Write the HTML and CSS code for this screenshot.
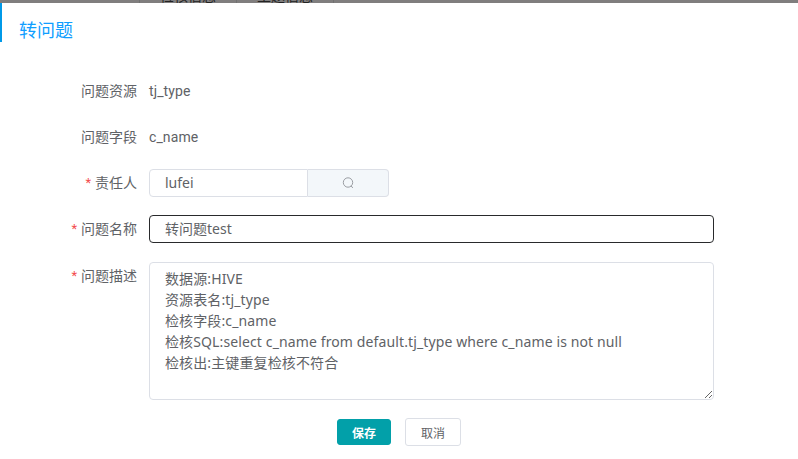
FILE: index.html
```html
<!DOCTYPE html>
<html lang="zh-CN">
<head>
<meta charset="utf-8">
<title>转问题</title>
<link rel="stylesheet" href="styles.css">
</head>
<body>
<div class="backdrop"><span class="tab"></span><span class="tab">检核信息</span><span class="tab">主题信息</span></div>
<main class="dialog">
  <h1 class="title">转问题</h1>
  <form class="form">
    <div class="row"><span class="label">问题资源</span><span class="value">tj_type</span></div>
    <div class="row"><span class="label">问题字段</span><span class="value">c_name</span></div>
    <div class="row">
      <label class="label required" for="owner">责任人</label>
      <div class="group">
        <input class="input" id="owner" value="lufei">
        <button class="search" type="button" aria-label="搜索"><svg viewBox="0 0 12 12" width="12" height="12"><circle cx="6" cy="5.5" r="4.7"/><path d="M8.8 9 11 10.8"/></svg></button>
      </div>
    </div>
    <div class="row">
      <label class="label required" for="name">问题名称</label>
      <input class="input active" id="name" value="转问题test">
    </div>
    <div class="row tall">
      <label class="label required" for="desc">问题描述</label>
      <textarea class="textarea" id="desc" spellcheck="false">数据源:HIVE
资源表名:tj_type
检核字段:c_name
检核SQL:select c_name from default.tj_type where c_name is not null
检核出:主键重复检核不符合</textarea>
    </div>
  </form>
  <footer class="actions">
    <button class="button primary" type="button">保存</button>
    <button class="button" type="button">取消</button>
  </footer>
</main>
</body>
</html>
```
FILE: styles.css
```css
* { box-sizing: border-box; }
body {
  margin: 0;
  height: 459px;
  overflow: hidden;
  background: #fff;
  color: #606266;
  font: 14px/28px Roboto, "Noto Sans CJK SC", sans-serif;
}
.backdrop {
  display: flex;
  align-items: flex-end;
  height: 3px;
  padding-left: 19px;
  overflow: hidden;
  background: #807e7e;
  color: #222;
}
.tab {
  flex: none;
  width: 97px;
  height: 20px;
  border-right: 1px solid #717171;
  line-height: 26px;
  text-align: center;
}
.tab:first-child { width: 121px; }
.dialog { height: 456px; }
.title {
  height: 39px;
  margin: 0;
  padding: 0 0 0 17px;
  border-left: 2px solid #0099e8;
  color: #109eff;
  font-size: 18px;
  font-weight: 400;
  line-height: 55px;
}
.form { padding: 35px 0 0 60px; }
.row {
  display: flex;
  align-items: flex-start;
  height: 28px;
  margin-bottom: 18px;
}
.tall { height: 138px; margin-top: 19px; }
.label {
  width: 77px;
  margin-right: 12px;
  text-align: right;
  white-space: nowrap;
}
.value { letter-spacing: 0.1px; }
.required::before {
  content: "*";
  margin-right: 4px;
  color: #f34d4d;
  font-size: 13px;
  line-height: 1;
  vertical-align: 1px;
}
.group { display: flex; width: 240px; }
.input, .textarea {
  margin: 0;
  border: 1px solid #dcdfe6;
  border-radius: 4px;
  outline: 0;
  background: #fff;
  color: #606266;
  font-family: "Noto Sans", "Noto Sans CJK SC", sans-serif;
  font-size: 14px;
}
.input { width: 565px; height: 28px; padding: 0 15px 2px; }
.group .input { width: 159px; border-radius: 4px 0 0 4px; }
.active { border-color: #292a2c; }
.search {
  display: flex;
  align-items: center;
  justify-content: center;
  width: 81px;
  height: 28px;
  padding: 0;
  border: 1px solid #dcdfe6;
  border-left: 0;
  border-radius: 0 4px 4px 0;
  background: #f3f7fa;
}
.search svg { fill: none; stroke: #909399; stroke-width: 0.9; }
.textarea {
  width: 565px;
  height: 138px;
  padding: 5px 15px;
  letter-spacing: 0.12px;
  line-height: 21px;
  resize: vertical;
}
.actions {
  display: flex;
  align-items: center;
  gap: 14px;
  padding: 0 0 0 337px;
}
.button {
  width: 56px;
  height: 28px;
  padding: 0;
  border: 1px solid #dcdfe6;
  border-radius: 3px;
  background: #fff;
  color: #606266;
  font: 12px "Noto Sans CJK SC", sans-serif;
}
.primary {
  width: 54px;
  height: 26px;
  border-color: #02a0a9;
  background: #02a0a9;
  color: #fff;
  font-weight: 700;
}
```
